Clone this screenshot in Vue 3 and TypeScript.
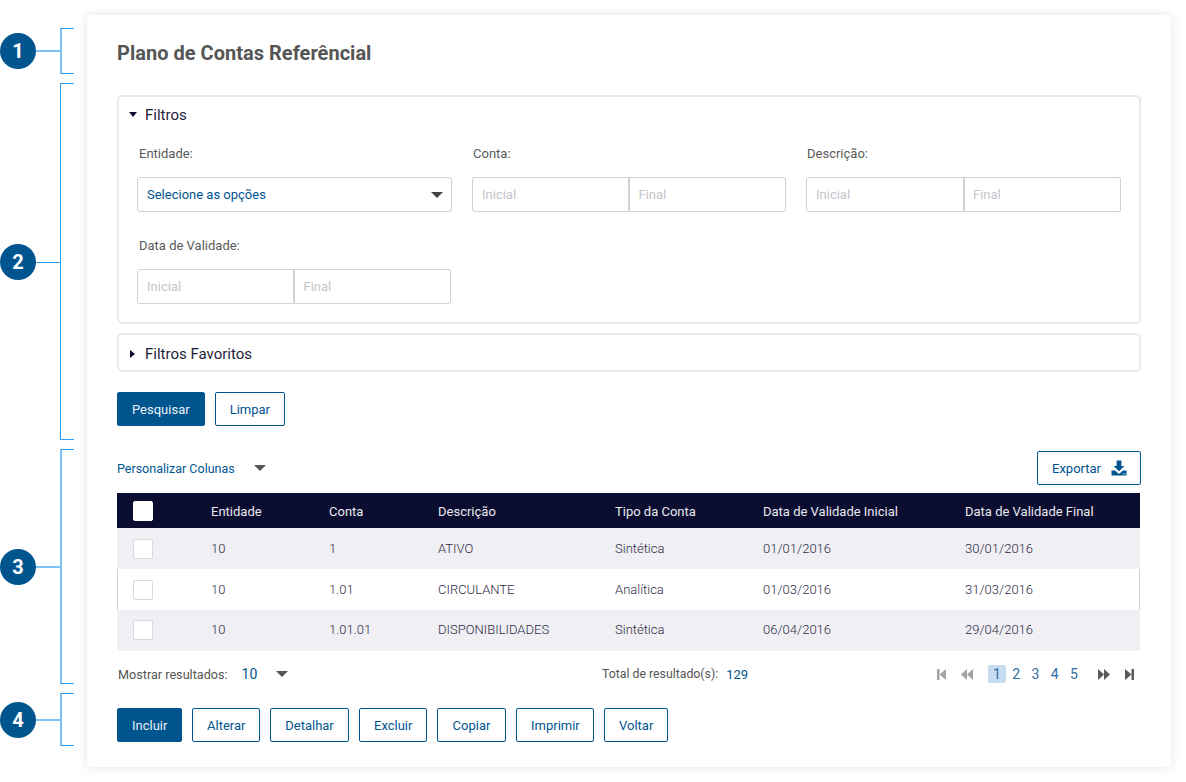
<template>
  <div class="page">
    <div
      v-for="c in callouts"
      :key="c.n"
      class="callout"
      :class="{ soft: c.soft }"
      :style="{ top: c.top + 'px', height: c.height + 'px' }"
    >
      <span class="bracket"></span>
      <span class="stem"></span>
      <span class="dot">{{ c.n }}</span>
    </div>

    <main class="card">
      <h1 class="title">Plano de Contas Referêncial</h1>

      <section class="panel filters">
        <div class="panel-head">
          <span class="tri-down"></span>
          <span>Filtros</span>
        </div>
        <div class="filter-grid">
          <div class="field">
            <label>Entidade:</label>
            <div class="select">
              <span>Selecione as opções</span>
              <span class="select-arrow"></span>
            </div>
          </div>
          <div class="field range-field" v-for="f in rangeFields" :key="f">
            <label>{{ f }}</label>
            <div class="range">
              <div class="input">Inicial</div>
              <div class="input">Final</div>
            </div>
          </div>
          <div class="field">
            <label>Data de Validade:</label>
            <div class="range narrow">
              <div class="input">Inicial</div>
              <div class="input">Final</div>
            </div>
          </div>
        </div>
      </section>

      <section class="panel favorites">
        <span class="tri-right"></span>
        <span>Filtros Favoritos</span>
      </section>

      <div class="btn-row search-row">
        <button class="btn primary pesquisar">Pesquisar</button>
        <button class="btn">Limpar</button>
      </div>

      <div class="table-tools">
        <div class="columns-link">
          <span>Personalizar Colunas</span>
          <span class="grey-arrow"></span>
        </div>
        <button class="btn export">
          Exportar
          <svg width="16" height="16" viewBox="0 0 16 16">
            <path d="M5.6 0.5h4.8v5.5h3l-5.4 5.2-5.4-5.2h3z" fill="#00558f" />
            <path d="M0.5 10.5h3.6l2.6 2.5c.7.7 1.9.7 2.6 0l2.6-2.5h3.6v5h-15z" fill="#00558f" />
            <rect x="11.6" y="13.4" width="1" height="1" fill="#fff" />
            <rect x="13.3" y="13.4" width="1" height="1" fill="#fff" />
          </svg>
        </button>
      </div>

      <div class="table">
        <div class="tr thead">
          <div><span class="check head-check"></span></div>
          <div v-for="h in headers" :key="h">{{ h }}</div>
        </div>
        <div v-for="(r, i) in rows" :key="i" class="tr body-row" :class="i % 2 === 0 ? 'shaded' : 'plain'">
          <div><span class="check"></span></div>
          <div v-for="(v, j) in r" :key="j">{{ v }}</div>
        </div>
      </div>

      <div class="table-foot">
        <div class="foot-left">
          <span class="muted show-label">Mostrar resultados:</span>
          <span class="blue">10</span>
          <span class="grey-arrow"></span>
        </div>
        <div class="foot-total">
          <span class="muted">Total de resultado(s):</span>
          <span class="blue">129</span>
        </div>
        <nav class="pager">
          <svg class="pg" width="9" height="11" viewBox="0 0 9 11" fill="#a3a3a3"><rect width="2.5" height="11" /><path d="M9 0v11L2.5 5.5z" /></svg>
          <svg class="pg" width="12" height="11" viewBox="0 0 12 11" fill="#a3a3a3"><path d="M6 0v11L0 5.5zM12 0v11L6 5.5z" /></svg>
          <div class="page-nums">
            <span v-for="p in 5" :key="p" class="page-num" :class="{ active: p === 1 }">{{ p }}</span>
          </div>
          <svg class="pg" width="12" height="11" viewBox="0 0 12 11" fill="#5a5a5a"><path d="M0 0v11L6 5.5zM6 0v11L12 5.5z" /></svg>
          <svg class="pg" width="9" height="11" viewBox="0 0 9 11" fill="#5a5a5a"><path d="M0 0v11L6.5 5.5z" /><rect x="6.5" width="2.5" height="11" /></svg>
        </nav>
      </div>

      <div class="btn-row actions">
        <button class="btn primary" :style="{ width: '65px' }">Incluir</button>
        <button v-for="a in actions" :key="a.label" class="btn" :style="{ width: a.width + 'px' }">{{ a.label }}</button>
      </div>
    </main>
  </div>
</template>

<script setup lang="ts">
const callouts = [
  { n: 1, top: 28, height: 46, soft: true },
  { n: 2, top: 83, height: 357, soft: false },
  { n: 3, top: 449, height: 235, soft: true },
  { n: 4, top: 693, height: 53, soft: true },
];

const rangeFields = ['Conta:', 'Descrição:'];

const headers = ['Entidade', 'Conta', 'Descrição', 'Tipo da Conta', 'Data de Validade Inicial', 'Data de Validade Final'];

const rows = [
  ['10', '1', 'ATIVO', 'Sintética', '01/01/2016', '30/01/2016'],
  ['10', '1.01', 'CIRCULANTE', 'Analítica', '01/03/2016', '31/03/2016'],
  ['10', '1.01.01', 'DISPONIBILIDADES', 'Sintética', '06/04/2016', '29/04/2016'],
];

const actions = [
  { label: 'Alterar', width: 68 },
  { label: 'Detalhar', width: 79 },
  { label: 'Excluir', width: 68 },
  { label: 'Copiar', width: 69 },
  { label: 'Imprimir', width: 78 },
  { label: 'Voltar', width: 64 },
];
</script>

<style>
html,
body {
  background: #fff;
}
</style>

<style scoped>
.page {
  position: relative;
  width: 1186px;
  height: 782px;
  padding: 15px 15px 15px 87px;
  box-sizing: border-box;
  font-family: Roboto, "Liberation Sans", sans-serif;
  font-size: 13px;
  color: #2e2c44;
  overflow: hidden;
}

.callout {
  position: absolute;
  left: 0;
  width: 74px;
}

.bracket {
  position: absolute;
  left: 60px;
  top: 0;
  bottom: 0;
  width: 14px;
  border: 1px solid #2b9df4;
  border-right: 0;
  box-sizing: border-box;
}

.soft .bracket {
  border-left: 2px solid #7cc3f8;
}

.stem {
  position: absolute;
  left: 34px;
  top: 50%;
  width: 26px;
  border-top: 1px solid #2b9df4;
}

.soft .stem {
  border-top: 2px solid #7cc3f8;
  margin-top: -1px;
}

.dot {
  position: absolute;
  left: 0;
  top: 50%;
  margin-top: -18px;
  width: 36px;
  height: 36px;
  border-radius: 50%;
  background: #00558f;
  color: #fff;
  font-size: 20px;
  font-weight: 700;
  display: flex;
  align-items: center;
  justify-content: center;
}

.card {
  height: 752px;
  box-sizing: border-box;
  padding: 0 30px;
  background: #fff;
  border-radius: 3px;
  box-shadow: 0 0 12px rgba(0, 0, 0, 0.1);
}

.title {
  margin: 0;
  height: 80px;
  line-height: 76px;
  font-size: 20px;
  font-weight: 700;
  letter-spacing: 0.02px;
  color: #555;
}

.panel {
  border: 2px solid #e6e9ee;
  border-radius: 5px;
  box-sizing: border-box;
  color: #1f1d3a;
  font-size: 15px;
}

.filters {
  height: 229px;
}

.panel-head {
  display: flex;
  align-items: center;
  gap: 8px;
  height: 35px;
  padding-left: 10px;
}

.tri-down {
  width: 0;
  height: 0;
  border-left: 4px solid transparent;
  border-right: 4px solid transparent;
  border-top: 5px solid #0a0d30;
}

.tri-right {
  width: 0;
  height: 0;
  border-top: 4px solid transparent;
  border-bottom: 4px solid transparent;
  border-left: 5px solid #0a0d30;
}

.favorites {
  height: 39px;
  margin-top: 9px;
  display: flex;
  align-items: center;
  gap: 10px;
  padding: 2px 0 0 11px;
}

.filter-grid {
  display: grid;
  grid-template-columns: 315px 314px 315px;
  column-gap: 20px;
  row-gap: 25px;
  padding: 13px 18px 0;
}

.field label {
  display: block;
  height: 16px;
  margin-bottom: 16px;
  padding-left: 2px;
  font-size: 13px;
  line-height: 18px;
  color: #5a5a5a;
}

.range-field label {
  padding-left: 1px;
}

.select,
.input {
  height: 35px;
  box-sizing: border-box;
  border: 1px solid #cfd2d6;
  border-radius: 3px;
  display: flex;
  align-items: center;
  padding-left: 9px;
  font-size: 13px;
}

.select {
  justify-content: space-between;
  color: #00558f;
  padding-right: 8px;
}

.select-arrow {
  width: 0;
  height: 0;
  border-left: 6px solid transparent;
  border-right: 6px solid transparent;
  border-top: 6px solid #444;
}

.range {
  display: grid;
  grid-template-columns: 1fr 1fr;
}

.narrow {
  width: 314px;
}

.input {
  color: #c3c5c9;
}

.input:first-child {
  border-radius: 3px 0 0 3px;
}

.input:last-child {
  border-left: 0;
  padding-left: 9.5px;
  border-radius: 0 3px 3px 0;
  box-shadow: inset 1px 0 0 #cfd2d6;
}

.btn-row {
  display: flex;
  gap: 10px;
}

.search-row {
  margin-top: 20px;
}

.btn {
  height: 34px;
  padding: 0 14px;
  box-sizing: border-box;
  border: 1px solid #00558f;
  border-radius: 2px;
  background: #fff;
  color: #00558f;
  font-family: inherit;
  font-size: 13px;
}

.btn.primary {
  background: #00558f;
  color: #e8f0f6;
}

.table-tools {
  display: flex;
  justify-content: space-between;
  align-items: center;
  margin-top: 25px;
  height: 34px;
}

.columns-link {
  display: flex;
  align-items: center;
  gap: 19px;
  font-size: 12.5px;
  color: #00558f;
}

.grey-arrow {
  width: 0;
  height: 0;
  border-left: 6px solid transparent;
  border-right: 6px solid transparent;
  border-top: 6px solid #555;
}

.export {
  display: flex;
  align-items: center;
  justify-content: space-between;
  width: 104px;
  padding: 0 13px 0 14px;
}

.table {
  margin-top: 8px;
}

.tr {
  display: grid;
  grid-template-columns: 94px 118px 109px 177px 148px 202px 1fr;
  align-items: center;
  height: 41px;
  margin-right: 1px;
}

.tr > div:first-child {
  padding-left: 16px;
  display: flex;
}

.body-row {
  font-weight: 300;
}

.body-row:last-child > div {
  padding-bottom: 2px;
}

.thead {
  height: 35px;
  background: #0a0d30;
  color: #e9e9ee;
}

.thead > div:not(:first-child) {
  padding-top: 1px;
}

.shaded {
  background: #efeff4;
}

.plain {
  border-left: 1px solid #cfd2d6;
  border-right: 1px solid #cfd2d6;
  grid-template-columns: 93px 118px 109px 177px 148px 202px 1fr;
}

.tr.plain > div:first-child {
  padding-left: 15px;
}

.check {
  width: 20px;
  height: 20px;
  box-sizing: border-box;
  background: #fff;
  border: 1px solid #d8d8de;
  border-radius: 2px;
}

.head-check {
  border-color: #fff;
}

.table-foot {
  display: flex;
  align-items: center;
  height: 46px;
  padding-left: 1px;
}

.foot-left {
  display: flex;
  align-items: center;
  width: 484px;
}

.show-label {
  font-size: 12.65px;
}

.foot-left .blue {
  margin: 0 19px 0 14px;
  font-size: 14px;
}

.foot-total {
  display: flex;
  gap: 8px;
}

.foot-total .muted {
  font-size: 12.3px;
}

.muted {
  color: #555;
}

.blue {
  color: #00558f;
}

.pager {
  margin-left: auto;
  margin-right: 7px;
  display: flex;
  align-items: center;
  gap: 15px;
  color: #2f6da3;
  font-size: 14px;
}

.page-nums {
  display: flex;
  gap: 1.25px;
}

.page-num {
  width: 18px;
  height: 18px;
  border-radius: 2px;
  text-align: center;
  line-height: 18px;
}

.page-num.active {
  background: #c6dcf0;
}

.actions {
  margin-top: 11px;
}
</style>
